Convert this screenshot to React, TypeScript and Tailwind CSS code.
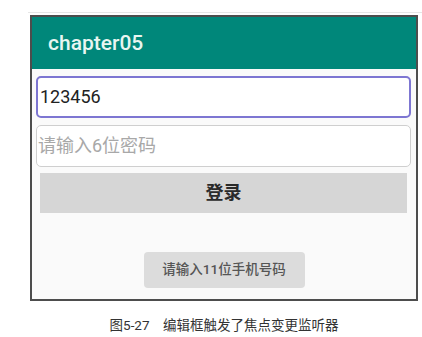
import React from "react";

const font = { fontFamily: 'Roboto, "Noto Sans CJK SC", sans-serif' };

export default function App() {
  return (
    <div
      className="w-[422px] h-[337px] bg-white overflow-hidden flex flex-col"
      style={font}
    >
      <div className="mt-[12px] ml-[28px] h-px bg-[#e6e6e6]" />
      <div className="mt-[2px] ml-[30px] w-[388px] h-[286px] border-2 border-[#4d4d4d] bg-[#fafafa] flex flex-col">
        <div className="h-[52px] bg-[#00877a] flex items-center pl-[16px]">
          <span className="text-[21px] font-medium text-[#e8f6f1] leading-none">chapter05</span>
        </div>
        <div className="flex flex-col pt-[7px]">
          <div className="ml-[4px] mr-[5px] h-[42px] rounded-[5px] border-2 border-[#7d76d2] bg-white flex items-center pl-[2px]">
            <span className="text-[18px] text-[#222] leading-none">123456</span>
          </div>
          <div className="mt-[7px] ml-[4px] mr-[5px] h-[42px] rounded-[5px] border border-[#cfcfcf] bg-white flex items-center pl-[1px]">
            <span className="text-[18px] text-[#a8a8a8] leading-none">请输入6位密码</span>
          </div>
          <div className="mt-[6px] ml-[8px] mr-[9px] h-[40px] bg-[#d6d6d6] flex items-center justify-center">
            <span className="text-[18px] font-bold text-[#2a2a2a] leading-none">登录</span>
          </div>
          <div className="mt-[39px] flex justify-center">
            <div className="w-[161px] h-[36px] rounded-[4px] bg-[#dcdcdc] flex items-center justify-center">
              <span className="text-[13.5px] font-medium text-[#555] leading-none">请输入11位手机号码</span>
            </div>
          </div>
        </div>
      </div>
      <div className="mt-[18px] ml-[30px] w-[388px] flex justify-center">
        <span className="text-[13.5px] text-[#333] leading-none whitespace-pre">图5-27    编辑框触发了焦点变更监听器</span>
      </div>
    </div>
  );
}
